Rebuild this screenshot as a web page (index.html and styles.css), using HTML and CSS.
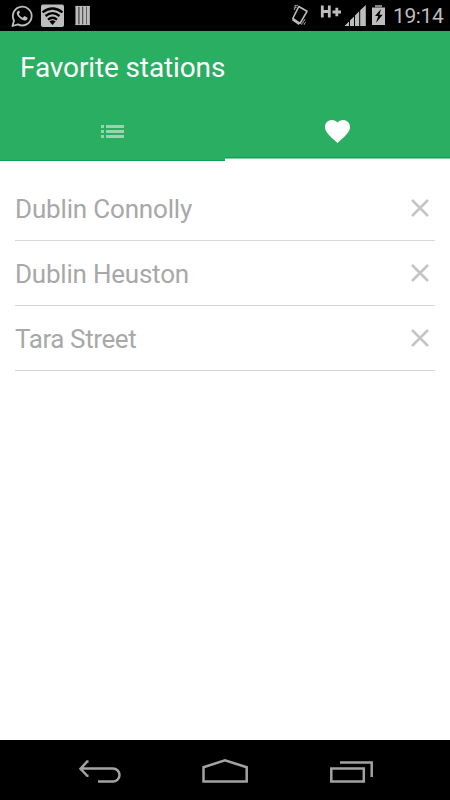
FILE: index.html
```
<!DOCTYPE html>
<html lang="en">
<head>
<meta charset="utf-8">
<title>Favorite stations</title>
<link rel="stylesheet" href="styles.css">
</head>
<body>
<div class="screen">
  <div class="status">
    <svg class="status-left" width="100" height="31" viewBox="0 0 100 31" fill="none" stroke="#bdbdbd">
      <path d="M12.500 26 14 20.500A9.400 9.400 0 1 1 18 24.400Z" stroke-width="1.800" stroke-linejoin="round"/>
      <path d="M19 10.400c-3 .8-3 4 .2 7.100 3.100 3 6.500 4.200 8.200 1.500l.2-1.300-3.200-1.600-1.700 1.700c-1.900-.8-3.100-2-3.900-3.800l1.200-1.500-1-2.200Z" fill="#bdbdbd" stroke="none"/>
      <rect x="41" y="4.500" width="23" height="22.500" rx="2" fill="#bdbdbd" stroke="none"/>
      <path d="M42.500 12.300Q52.500 4.700 62.500 12.300M45.500 16Q52.500 10.300 59.500 16M48 19.600Q52.500 16 57 19.600" stroke="#000" stroke-width="2.300"/>
      <path d="M49.400 21.400Q52.500 19.300 55.600 21.400L52.500 25Z" fill="#000" stroke="none"/>
      <path d="M77 6v19M80.900 6v19M84.700 6v19M88.300 6v19" stroke-width="3.100"/>
      <path d="M75.500 6.400h14.300M75.500 24.600h14.300" stroke-width=".8"/>
    </svg>
    <svg class="status-right" width="100" height="31" viewBox="288 0 100 31" fill="none" stroke="#bdbdbd">
      <path d="m298.800 6.500 8.200 4.800-7 12-7.200-4.800Z" stroke-width="1.600" stroke-linejoin="round"/>
      <path d="m292.500 19.500 6.800 4.600" stroke-width="2"/>
      <path d="m297.500 4.800-3.500 5M295.500 5l-1.500 2.500M301.500 24.500l3.500-5.500M304 24.500l1.500-2.500" stroke-width="1.200" stroke-dasharray="1.500 .7"/>
      <path d="M322.300 5.500v12M329.300 5.500v12M322 11.500h7M332.500 12h8.500M336.800 7.700v8.500" stroke-width="2.800"/>
      <path d="M344.500 26 349 21.500V26ZM350 26v-5.500l4-4V26ZM355 26V15.500l4.200-4.200V26ZM360.200 26V10.300L365.800 5v21Z" fill="#bdbdbd" stroke="none"/>
      <path d="M372 7.500h13V25h-13Z" fill="#bdbdbd" stroke="none"/>
      <path d="M375 5h7v2.500h-7Z" fill="#858585" stroke="none"/>
      <path d="m381 9-6 7h3.200L376 22.800l6.700-8h-3.300Z" fill="#000" stroke="none"/>
    </svg>
    <span class="clock">19:14</span>
  </div>
  <header class="header">
    <h1 class="title">Favorite stations</h1>
    <nav class="tabs">
      <div class="tab">
        <svg class="list-icon" width="24" height="15" viewBox="0 0 24 15" fill="#93d6af"><path d="M1 1h3v3H1ZM6 1h18v3H6ZM1 6h3v3H1ZM6 6h18v3H6ZM1 11h3v3H1ZM6 11h18v3H6Z"/></svg>
      </div>
      <div class="tab active">
        <svg width="25" height="23" viewBox="2 3 20 18.350" preserveAspectRatio="none" fill="#fff"><path d="m12 21.350-1.450-1.320C5.400 15.360 2 12.280 2 8.500 2 5.420 4.420 3 7.500 3c1.740 0 3.410.81 4.500 2.090C13.090 3.810 14.760 3 16.500 3 19.580 3 22 5.420 22 8.500c0 3.780-3.400 6.860-8.550 11.540Z"/></svg>
      </div>
    </nav>
  </header>
  <main class="list">
    <div class="row"><span class="name connolly">Dublin Connolly</span><svg class="remove" width="18" height="18" viewBox="0 0 18 18"><path d="m1 1 16 16M17 1 1 17"/></svg></div>
    <div class="row"><span class="name heuston">Dublin Heuston</span><svg class="remove" width="18" height="18" viewBox="0 0 18 18"><path d="m1 1 16 16M17 1 1 17"/></svg></div>
    <div class="row"><span class="name tara">Tara Street</span><svg class="remove" width="18" height="18" viewBox="0 0 18 18"><path d="m1 1 16 16M17 1 1 17"/></svg></div>
  </main>
  <footer class="navbar">
    <svg width="450" height="60" viewBox="0 740 450 60" fill="none" stroke="#a3a3a3" stroke-width="2.500">
      <path d="M98 781.500h15a6.500 6.500 0 0 0 0-13H81M88.500 761.500h-1.300L80.500 768.800l6.700 7h1.300"/>
      <path d="M203.500 781.500V767.200L225 760.300l21.700 6.900v14.300Z"/>
      <path d="M331.300 768.500h32.500v13h-32.500ZM340 762.500h31.700V777"/>
    </svg>
  </footer>
</div>
</body>
</html>
```

FILE: styles.css
```
* { box-sizing: border-box; }
body { margin: 0; background: #fff; font-family: Roboto, "Liberation Sans", sans-serif; }
svg { display: block; flex: none; }
.screen { width: 450px; height: 800px; display: flex; flex-direction: column; overflow: hidden; }
.status { height: 31px; flex: none; display: flex; align-items: center; background: #000; }
.status-right { margin-left: 188px; }
.clock { margin-left: 5px; padding-top: 2px; font-size: 21px; letter-spacing: -.4px; line-height: 29px; color: #bdbdbd; white-space: nowrap; }
.header { height: 130px; flex: none; display: flex; flex-direction: column; background: #29ae62; border-bottom: 1px solid #0fa24e; }
.title { margin: 0; height: 72px; padding-left: 20px; font-size: 28px; letter-spacing: -.12px; font-weight: 400; line-height: 74px; color: #fff; }
.tabs { display: flex; height: 58px; margin-bottom: -1px; }
.tab { flex: 1; display: flex; justify-content: center; padding-top: 21px; }
.tab.active { padding-top: 17px; border-bottom: 2px solid #fff; box-shadow: inset 0 -1px #86d0a4, inset 0 -2px #0fa24e; }
.list-icon { margin-right: 2px; }
.list { flex: 1; padding: 15px 15px 0; }
.row { height: 65px; padding: 0 6px 0 0; display: flex; align-items: center; justify-content: space-between; border-bottom: 1px solid #d6d6d6; }
.name { font-size: 26px; line-height: 30px; padding-top: 2px; color: #a8a8a8; white-space: nowrap; }
.connolly { letter-spacing: -.17px; }
.heuston { letter-spacing: -.22px; }
.tara { letter-spacing: -.4px; }
.remove { fill: none; stroke: #c4c4c4; stroke-width: 2.500; }
.navbar { height: 60px; flex: none; background: #000; }
```
